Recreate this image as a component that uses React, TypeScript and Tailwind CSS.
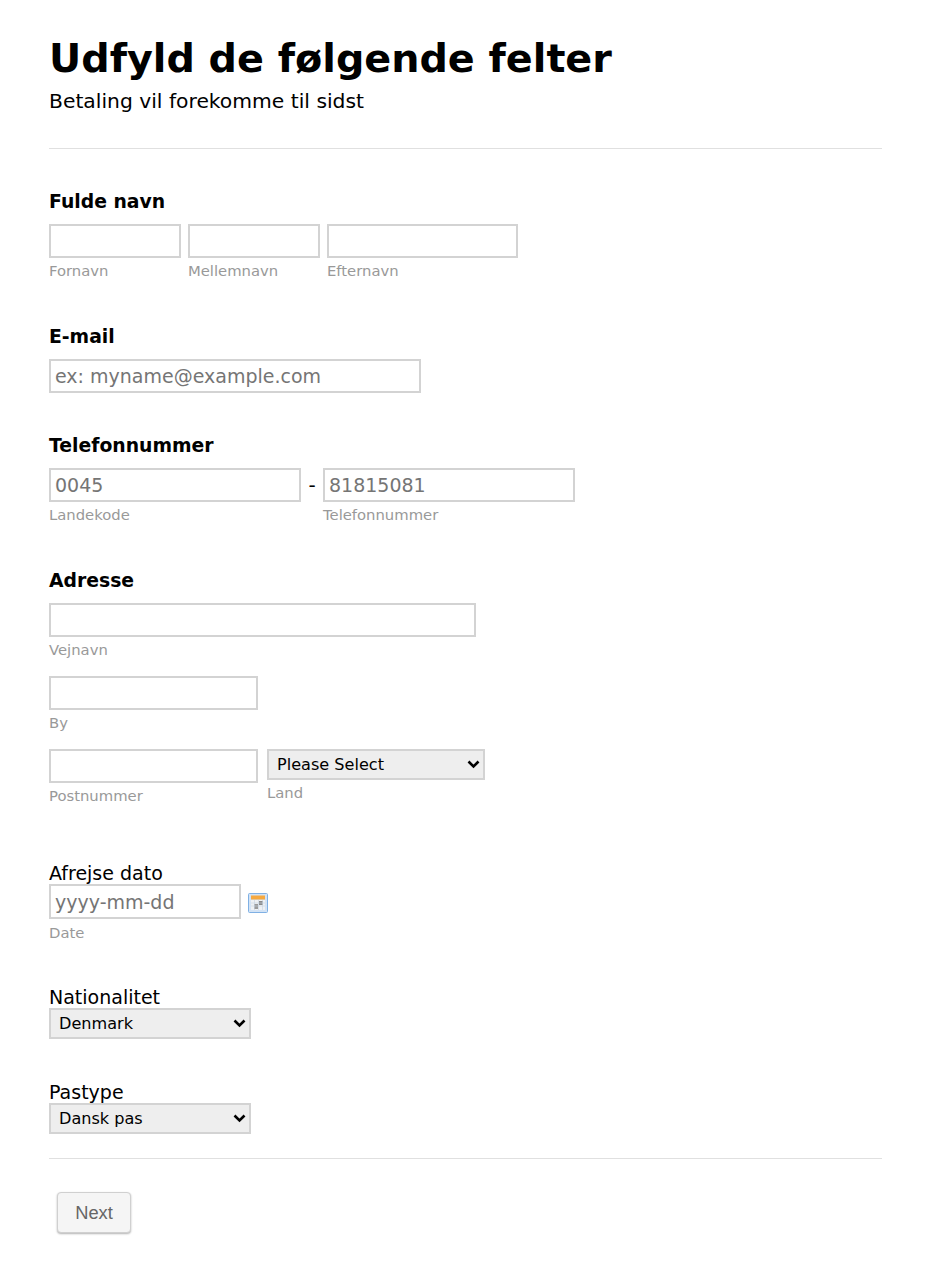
import React from "react";

const inputCls = "block h-[34px] border-2 border-[#d3d3d3] bg-white pl-[4px] text-[19px] text-[#555] placeholder:text-[#757575] outline-none";
const subCls = "block mt-[3px] text-[14.8px] leading-[20px] text-[#999]";
const headCls = "block pt-[1px] text-[18.8px] leading-[26px] font-bold text-black";
const plainCls = "block -mb-[2px] text-[19px] leading-[25px] text-black";
const selCls = "block h-[31px] w-full appearance-none border-2 border-[#d3d3d3] bg-[#eee] pl-[8px] pt-[1px] text-[16.1px] text-black outline-none";

function Field({ w, label, placeholder }: { w: string; label: string; placeholder?: string }) {
  return (
    <label className="block">
      <input className={`${inputCls} ${w}`} placeholder={placeholder} />
      <span className={subCls}>{label}</span>
    </label>
  );
}

function Select({ w, value }: { w: string; value: string }) {
  return (
    <div className={`relative ${w}`}>
      <select className={selCls} defaultValue={value}>
        <option>{value}</option>
      </select>
      <svg
        width="13"
        height="9"
        viewBox="0 0 13 9"
        className="pointer-events-none absolute right-[5px] top-[11px]"
      >
        <path d="M1.5 1.5 L6.5 6.5 L11.5 1.5" fill="none" stroke="#000" strokeWidth="2.6" />
      </svg>
    </div>
  );
}

function CalendarIcon() {
  return (
    <svg width="20" height="20" viewBox="0 0 20 20" className="ml-[7px] mt-[9px] shrink-0">
      <rect x="0.5" y="0.5" width="19" height="19" rx="1" fill="#d3e3f5" stroke="#7fb0e4" />
      <rect x="3" y="2.5" width="14" height="4" fill="#f6a940" />
      <rect x="3" y="7" width="14" height="10" fill="#eef1f4" />
      <rect x="6" y="11" width="4" height="5" fill="#9a9a9a" />
      <rect x="11" y="8" width="4" height="4" fill="#8a8a8a" />
      <path d="M3 10h14M3 13h14M6.5 7v10M10.5 7v10M14.5 7v10" stroke="#c8d4e0" strokeWidth="0.6" />
    </svg>
  );
}

export default function App() {
  return (
    <div className="min-h-[1264px] bg-white pl-[49px] pr-[48px] pt-[32px] font-['DejaVu_Sans',Verdana,sans-serif] text-black">
      <header className="border-b border-[#e0e0e0] pb-[34px]">
        <h1 className="text-[39.7px] leading-[52px] font-bold">Udfyld de følgende felter</h1>
        <p className="mt-[4px] text-[20.3px] leading-[26px]">Betaling vil forekomme til sidst</p>
      </header>

      <section className="mt-[39px]">
        <span className={headCls}>Fulde navn</span>
        <div className="mt-[9px] flex gap-[7px]">
          <Field w="w-[132px]" label="Fornavn" />
          <Field w="w-[132px]" label="Mellemnavn" />
          <Field w="w-[191px]" label="Efternavn" />
        </div>
      </section>

      <section className="mt-[42px]">
        <span className={headCls}>E-mail</span>
        <input className={`${inputCls} mt-[9px] w-[372px]`} placeholder="ex: myname@example.com" />
      </section>

      <section className="mt-[39px]">
        <span className={headCls}>Telefonnummer</span>
        <div className="mt-[9px] flex">
          <Field w="w-[252px]" label="Landekode" placeholder="0045" />
          <span className="w-[22px] pt-[3px] text-center text-[20px] leading-[28px]">-</span>
          <Field w="w-[252px]" label="Telefonnummer" placeholder="81815081" />
        </div>
      </section>

      <section className="mt-[42px]">
        <span className={headCls}>Adresse</span>
        <div className="mt-[9px]">
          <Field w="w-[427px]" label="Vejnavn" />
        </div>
        <div className="mt-[16px]">
          <Field w="w-[209px]" label="By" />
        </div>
        <div className="mt-[16px] flex gap-[9px]">
          <Field w="w-[209px]" label="Postnummer" />
          <label className="block">
            <Select w="w-[218px]" value="Please Select" />
            <span className={subCls}>Land</span>
          </label>
        </div>
      </section>

      <section className="mt-[55px]">
        <span className={plainCls}>Afrejse dato</span>
        <div className="flex">
          <label className="block">
            <input className={`${inputCls} h-[35px] w-[192px]`} placeholder="yyyy-mm-dd" />
            <span className="mt-[4px] block text-[14.8px] leading-[20px] text-[#999]">Date</span>
          </label>
          <CalendarIcon />
        </div>
      </section>

      <section className="mt-[42px]">
        <span className={plainCls}>Nationalitet</span>
        <Select w="w-[202px]" value="Denmark" />
      </section>

      <section className="mt-[41px]">
        <span className={plainCls}>Pastype</span>
        <Select w="w-[202px]" value="Dansk pas" />
      </section>

      <footer className="mt-[24px] border-t border-[#e0e0e0] pl-[8px] pt-[33px]">
        <button className="h-[41px] w-[74px] rounded-[4px] border border-[#d0d0d0] bg-[#f5f5f5] font-['Liberation_Sans',Arial,sans-serif] text-[18.3px] text-[#666] shadow-[0_1px_2px_rgba(0,0,0,0.3)]">
          Next
        </button>
      </footer>
    </div>
  );
}
